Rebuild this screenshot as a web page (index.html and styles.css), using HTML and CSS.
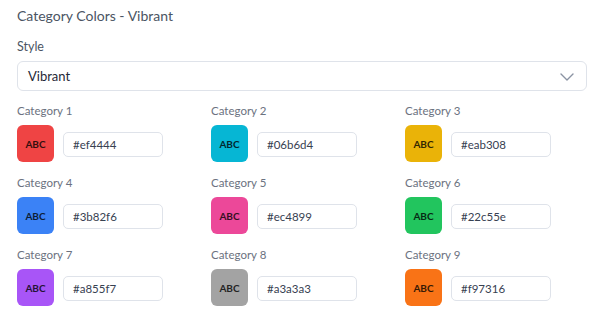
FILE: index.html
```html
<!DOCTYPE html>
<html lang="en">
<head>
    <meta charset="UTF-8">
    <title>Category Colors</title>
    <link rel="stylesheet" href="styles.css">
</head>
<body>
    <div class="panel">
        <h3 class="panel-title">Category Colors - Vibrant</h3>

        <label class="field-label">Style</label>
        <div class="select">
            <span>Vibrant</span>
            <svg class="chevron" width="14" height="8" viewBox="0 0 14 8"><path d="M1 1l6 6 6-6" fill="none" stroke="#8b93a3" stroke-width="1.4" stroke-linecap="round" stroke-linejoin="round"/></svg>
        </div>

        <div class="cat-grid">
            <div class="cat">
                <div class="cat-label">Category 1</div>
                <div class="cat-row">
                    <div class="swatch" style="--c:#ef4444">ABC</div>
                    <div class="hex-input">#ef4444</div>
                </div>
            </div>
            <div class="cat">
                <div class="cat-label">Category 2</div>
                <div class="cat-row">
                    <div class="swatch" style="--c:#06b6d4">ABC</div>
                    <div class="hex-input">#06b6d4</div>
                </div>
            </div>
            <div class="cat">
                <div class="cat-label">Category 3</div>
                <div class="cat-row">
                    <div class="swatch" style="--c:#eab308">ABC</div>
                    <div class="hex-input">#eab308</div>
                </div>
            </div>
            <div class="cat">
                <div class="cat-label">Category 4</div>
                <div class="cat-row">
                    <div class="swatch" style="--c:#3b82f6">ABC</div>
                    <div class="hex-input">#3b82f6</div>
                </div>
            </div>
            <div class="cat">
                <div class="cat-label">Category 5</div>
                <div class="cat-row">
                    <div class="swatch" style="--c:#ec4899">ABC</div>
                    <div class="hex-input">#ec4899</div>
                </div>
            </div>
            <div class="cat">
                <div class="cat-label">Category 6</div>
                <div class="cat-row">
                    <div class="swatch" style="--c:#22c55e">ABC</div>
                    <div class="hex-input">#22c55e</div>
                </div>
            </div>
            <div class="cat">
                <div class="cat-label">Category 7</div>
                <div class="cat-row">
                    <div class="swatch" style="--c:#a855f7">ABC</div>
                    <div class="hex-input">#a855f7</div>
                </div>
            </div>
            <div class="cat">
                <div class="cat-label">Category 8</div>
                <div class="cat-row">
                    <div class="swatch" style="--c:#a3a3a3">ABC</div>
                    <div class="hex-input">#a3a3a3</div>
                </div>
            </div>
            <div class="cat">
                <div class="cat-label">Category 9</div>
                <div class="cat-row">
                    <div class="swatch" style="--c:#f97316">ABC</div>
                    <div class="hex-input">#f97316</div>
                </div>
            </div>
        </div>
    </div>
</body>
</html>
```

FILE: styles.css
```css
body {
    margin: 0;
    background: #fff;
    font-family: Lato, 'Noto Sans', Arial, sans-serif;
    color: #374151;
}
.panel {
    width: 570px;
    padding: 6px 13px 0 17px;
    display: flex;
    flex-direction: column;
}
.panel-title {
    margin: 0;
    font-size: 14px;
    line-height: 20px;
    font-weight: 400;
    color: #4b5563;
}
.field-label {
    margin-top: 13px;
    font-size: 12.5px;
    line-height: 16px;
    color: #4b5563;
}
.select {
    margin-top: 6px;
    height: 30px;
    box-sizing: border-box;
    border: 1px solid #dfe3ea;
    border-radius: 6px;
    padding: 0 12px 0 10px;
    display: flex;
    align-items: center;
    justify-content: space-between;
    font-size: 13px;
    color: #1f2937;
}
.chevron { margin-top: 1px; }
.cat-grid {
    margin-top: 12px;
    display: grid;
    grid-template-columns: repeat(3, 182px);
    column-gap: 12px;
    row-gap: 13px;
}
.cat-label {
    font-size: 11.5px;
    line-height: 16px;
    color: #6b7280;
}
.cat-row {
    margin-top: 6px;
    display: flex;
    align-items: center;
    gap: 9px;
}
.swatch {
    width: 37px;
    height: 37px;
    border-radius: 6px;
    background: var(--c);
    color: color-mix(in srgb, var(--c) 22%, #000);
    font-size: 10px;
    font-weight: 700;
    display: flex;
    align-items: center;
    justify-content: center;
}
.hex-input {
    width: 100px;
    height: 25px;
    box-sizing: border-box;
    border: 1px solid #dfe3ea;
    border-radius: 5px;
    padding: 0 9px;
    display: flex;
    align-items: center;
    font-size: 11.5px;
    color: #374151;
    margin-top: 1px;
}
```
